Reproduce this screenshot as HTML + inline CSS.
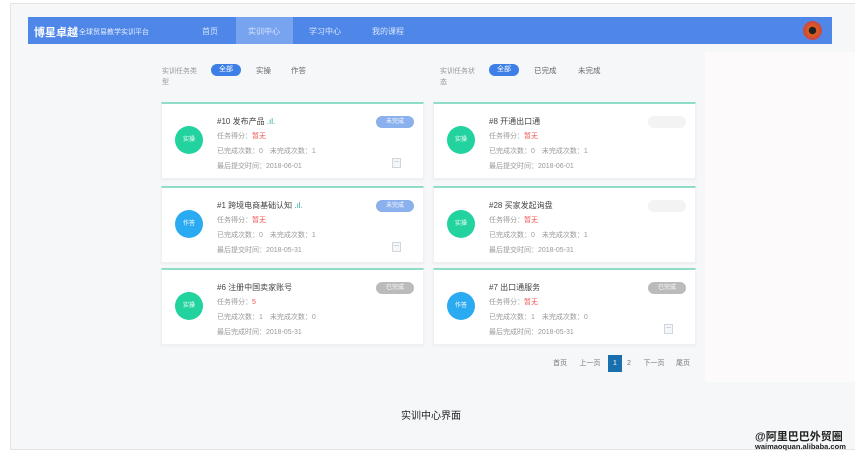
<!DOCTYPE html>
<html><head><meta charset="utf-8"><style>
*{margin:0;padding:0;box-sizing:border-box}
body{width:859px;height:457px;background:#fff;font-family:"Liberation Sans","Noto Sans CJK SC",sans-serif;position:relative;overflow:hidden}
.a{position:absolute}
.page{left:10px;top:3px;width:845px;height:447px;background:#f6f7f8;border-left:1px solid #e4e4e4;border-top:1px solid #e4e4e4;border-bottom:1px solid #e4e4e4}
.nav{left:28px;top:17px;width:804px;height:27px;background:#4f87e9}
.panel{left:150px;top:52px;width:555px;height:330px;background:#fff}
.pink{left:705px;top:52px;width:150px;height:330px;background:#fcfafb}
.nt{color:#d8e5fb;font-size:8px;top:26px}
.card{position:absolute;width:263px;height:77px;background:#fff;border:1px solid #eef0f2;border-top:2px solid #8fdcc8;box-shadow:0 1px 2px rgba(0,0,0,.05)}
.circ{position:absolute;left:13px;top:22px;width:28px;height:28px;border-radius:50%;color:#fff;font-size:6px;text-align:center;line-height:28px}
.g{background:#22d3a0}.b{background:#2aaaf0}
.t{position:absolute;left:55px;font-size:7px;color:#999;white-space:nowrap}
.ti{top:12px;font-size:8px;color:#444}
.st{position:absolute;right:9px;top:12px;width:38px;height:12px;border-radius:6px;color:#fff;font-size:6px;text-align:center;line-height:12px}
.red{color:#e55}
.f{font-size:7.5px;color:#666;top:65px}
.pill{background:#3d7fe6;color:#fff;border-radius:8px;height:12px;width:30px;text-align:center;line-height:12px;font-size:7px;top:64px}
.pg{top:355px;height:17px;font-size:7px;color:#777;line-height:17px;text-align:center}
.ic{position:absolute;right:22px;bottom:10px;width:9px;height:10px;border:1px solid #cfd6de;background:#f4f6f8}
.ic:before{content:"";position:absolute;left:1px;right:1px;top:2px;height:1px;background:#cfd6de}
</style></head><body>
<div class="a page"></div>
<div class="a pink"></div>
<div class="a nav"></div>
<div class="a" style="left:236px;top:17px;width:57px;height:27px;background:#77a3ef"></div>
<div class="a" style="left:34px;top:24px;color:#fff;font-size:11px;font-weight:bold">博星卓越</div>
<div class="a" style="left:79px;top:27px;color:#e6eefc;font-size:7px">全球贸易教学实训平台</div>
<div class="a nt" style="left:202px">首页</div>
<div class="a nt" style="left:248px">实训中心</div>
<div class="a nt" style="left:309px">学习中心</div>
<div class="a nt" style="left:372px">我的课程</div>
<div class="a" style="left:803px;top:21px;width:19px;height:19px;border-radius:50%;background:radial-gradient(circle,#222 25%,#e0601a 30%,#c44 70%,#fff 75%)"></div>

<div class="a" style="left:162px;top:66px;font-size:7px;color:#999;width:36px;line-height:11px">实训任务类型</div>
<div class="a pill" style="left:211px">全部</div>
<div class="a f" style="left:256px">实操</div>
<div class="a f" style="left:291px">作答</div>
<div class="a" style="left:440px;top:66px;font-size:7px;color:#999;width:36px;line-height:11px">实训任务状态</div>
<div class="a pill" style="left:489px">全部</div>
<div class="a f" style="left:534px">已完成</div>
<div class="a f" style="left:578px">未完成</div>

<div class="card" style="left:161px;top:102px"><div class="circ g">实操</div><div class="t ti">#10 发布产品 <span style="color:#2a9">.ıl.</span></div><div class="t" style="top:27px">任务得分：<span class="red">暂无</span></div><div class="t" style="top:42px">已完成次数：0　未完成次数：1</div><div class="t" style="top:57px">最后提交时间：2018-06-01</div><div class="st" style="background:#8ab0ee">未完成</div><div class="ic"></div></div>
<div class="card" style="left:433px;top:102px"><div class="circ g">实操</div><div class="t ti">#8 开通出口通</div><div class="t" style="top:27px">任务得分：<span class="red">暂无</span></div><div class="t" style="top:42px">已完成次数：0　未完成次数：1</div><div class="t" style="top:57px">最后提交时间：2018-06-01</div><div class="st" style="background:#f3f3f3"></div></div>
<div class="card" style="left:161px;top:186px"><div class="circ b">作答</div><div class="t ti">#1 跨境电商基础认知 <span style="color:#2a9">.ıl.</span></div><div class="t" style="top:27px">任务得分：<span class="red">暂无</span></div><div class="t" style="top:42px">已完成次数：0　未完成次数：1</div><div class="t" style="top:57px">最后提交时间：2018-05-31</div><div class="st" style="background:#8ab0ee">未完成</div><div class="ic"></div></div>
<div class="card" style="left:433px;top:186px"><div class="circ g">实操</div><div class="t ti">#28 买家发起询盘</div><div class="t" style="top:27px">任务得分：<span class="red">暂无</span></div><div class="t" style="top:42px">已完成次数：0　未完成次数：1</div><div class="t" style="top:57px">最后提交时间：2018-05-31</div><div class="st" style="background:#f3f3f3"></div></div>
<div class="card" style="left:161px;top:268px"><div class="circ g">实操</div><div class="t ti">#6 注册中国卖家账号</div><div class="t" style="top:27px">任务得分：<span class="red">5</span></div><div class="t" style="top:42px">已完成次数：1　未完成次数：0</div><div class="t" style="top:57px">最后完成时间：2018-05-31</div><div class="st" style="background:#bbb">已完成</div></div>
<div class="card" style="left:433px;top:268px"><div class="circ b">作答</div><div class="t ti">#7 出口通服务</div><div class="t" style="top:27px">任务得分：<span class="red">暂无</span></div><div class="t" style="top:42px">已完成次数：1　未完成次数：0</div><div class="t" style="top:57px">最后完成时间：2018-05-31</div><div class="st" style="background:#bbb">已完成</div><div class="ic"></div></div>

<div class="a pg" style="left:549px;width:22px">首页</div>
<div class="a pg" style="left:576px;width:28px">上一页</div>
<div class="a pg" style="left:608px;width:14px;background:#1a6fae;color:#fff">1</div>
<div class="a pg" style="left:622px;width:14px">2</div>
<div class="a pg" style="left:640px;width:28px">下一页</div>
<div class="a pg" style="left:672px;width:22px">尾页</div>

<div class="a" style="left:401px;top:407px;font-size:10px;color:#222">实训中心界面</div>
<div class="a" style="left:755px;top:428px;font-size:11px;color:#222;font-weight:bold;white-space:nowrap">@阿里巴巴外贸圈</div>
<div class="a" style="left:755px;top:442px;font-size:7.5px;color:#222;font-weight:bold">waimaoquan.alibaba.com</div>
</body></html>
